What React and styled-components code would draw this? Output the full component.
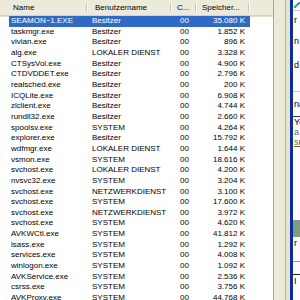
import React from 'react';
import styled, { createGlobalStyle } from 'styled-components';

const GlobalStyle = createGlobalStyle`
  html, body {
    margin: 0;
    padding: 0;
    background: #ffffff;
    overflow: hidden;
  }
`;

const Screen = styled.div`
  display: flex;
  width: 300px;
  height: 300px;
  overflow: hidden;
  font-family: "Liberation Sans", Arial, sans-serif;
  font-size: 8px;
  color: #000;
`;

const ListView = styled.div`
  width: 273px;
  flex-shrink: 0;
  background: #fff;
  border-right: 1px solid #a5a9a6;
  overflow: hidden;
`;

const COLS = '79px 84px 25px 53px';

const HeaderRow = styled.div`
  display: grid;
  grid-template-columns: ${COLS};
  height: 15px;
  padding-left: 9px;
  background: #ebeadb;
  border-bottom: 1px solid #d6d3c3;
  box-shadow: 0 1px 0 #e2dfd0;
`;

const HeaderCell = styled.div`
  display: flex;
  align-items: center;
  padding-left: ${(p) => p.$pad}px;
  white-space: nowrap;
  overflow: hidden;
`;

const HeaderLabel = styled.span`
  flex: 1;
  overflow: hidden;
`;

const Divider = styled.span`
  width: 1px;
  height: 9px;
  background: #c9c6b5;
  border-right: 1px solid #fff;
  flex-shrink: 0;
`;

const Row = styled.div`
  display: grid;
  grid-template-columns: ${COLS};
  height: 10.67px;
  line-height: 10.67px;
  margin-left: 9px;
  width: 241px;
  background: ${(p) => (p.$selected ? '#316ac5' : 'transparent')};
  color: ${(p) => (p.$selected ? '#fff' : '#000')};
  &:first-of-type {
    margin-top: 0.5px;
  }
`;

const Cell = styled.div`
  padding-left: ${(p) => p.$pad || 0}px;
  padding-right: ${(p) => p.$padRight || 0}px;
  text-align: ${(p) => p.$align || 'left'};
  white-space: nowrap;
  overflow: hidden;
`;

const Gutter = styled.div`
  width: 11px;
  flex-shrink: 0;
  background: #ece9d8;
  border-right: 1px solid #b9b5a4;
`;

const GutterInner = styled.div`
  width: 4px;
  flex-shrink: 0;
  background: #e6e3d2;
`;

const BlueEdge = styled.div`
  width: 3px;
  flex-shrink: 0;
  background: #0c2d9c;
`;

const Neighbor = styled.div`
  flex: 1;
  background: #fff;
  overflow: hidden;
  display: flex;
  flex-direction: column;
  font-size: 9px;
`;

const Frag = styled.div`
  height: ${(p) => p.$h}px;
  line-height: ${(p) => p.$h}px;
  padding-left: 1px;
  white-space: nowrap;
  background: ${(p) => p.$bg || 'transparent'};
  border-bottom: ${(p) => (p.$line ? `1px solid ${p.$line}` : 'none')};
  color: ${(p) => p.$color || '#000'};
  text-decoration: ${(p) => (p.$link ? 'underline' : 'none')};
`;

const processes = [
  ['SEAMON~1.EXE', 'Besitzer', '35.080 K'],
  ['taskmgr.exe', 'Besitzer', '1.852 K'],
  ['vivian.exe', 'Besitzer', '896 K'],
  ['alg.exe', 'LOKALER DIENST', '3.328 K'],
  ['CTSysVol.exe', 'Besitzer', '4.900 K'],
  ['CTDVDDET.exe', 'Besitzer', '2.796 K'],
  ['realsched.exe', 'Besitzer', '200 K'],
  ['ICQLite.exe', 'Besitzer', '6.908 K'],
  ['zlclient.exe', 'Besitzer', '4.744 K'],
  ['rundll32.exe', 'Besitzer', '2.660 K'],
  ['spoolsv.exe', 'SYSTEM', '4.264 K'],
  ['explorer.exe', 'Besitzer', '15.792 K'],
  ['wdfmgr.exe', 'LOKALER DIENST', '1.644 K'],
  ['vsmon.exe', 'SYSTEM', '18.616 K'],
  ['svchost.exe', 'LOKALER DIENST', '4.200 K'],
  ['nvsvc32.exe', 'SYSTEM', '3.204 K'],
  ['svchost.exe', 'NETZWERKDIENST', '3.100 K'],
  ['svchost.exe', 'SYSTEM', '17.600 K'],
  ['svchost.exe', 'NETZWERKDIENST', '3.972 K'],
  ['svchost.exe', 'SYSTEM', '4.620 K'],
  ['AVKWCtl.exe', 'SYSTEM', '41.812 K'],
  ['lsass.exe', 'SYSTEM', '1.292 K'],
  ['services.exe', 'SYSTEM', '4.008 K'],
  ['winlogon.exe', 'SYSTEM', '1.092 K'],
  ['AVKService.exe', 'SYSTEM', '2.536 K'],
  ['csrss.exe', 'SYSTEM', '3.756 K'],
  ['AVKProxy.exe', 'SYSTEM', '44.768 K'],
];

const App = () => {
  return (
    <>
      <GlobalStyle />
      <Screen>
        <ListView>
          <HeaderRow>
            <HeaderCell $pad={4}><HeaderLabel>Name</HeaderLabel><Divider /></HeaderCell>
            <HeaderCell $pad={7}><HeaderLabel>Benutzername</HeaderLabel><Divider /></HeaderCell>
            <HeaderCell $pad={5}><HeaderLabel>C...</HeaderLabel><Divider /></HeaderCell>
            <HeaderCell $pad={5}><HeaderLabel>Speicher...</HeaderLabel><Divider /></HeaderCell>
          </HeaderRow>
          {processes.map(([name, user, mem], i) => (
            <Row key={i} $selected={i === 0}>
              <Cell $pad={2}>{name}</Cell>
              <Cell $pad={4}>{user}</Cell>
              <Cell $pad={8}>00</Cell>
              <Cell $align="right" $padRight={5}>{mem}</Cell>
            </Row>
          ))}
        </ListView>
        <Gutter />
        <GutterInner />
        <BlueEdge />
        <Neighbor>
          <Frag $h={10} $line="#c8c8c8">
            <svg width="7" height="6" viewBox="0 0 7 6">
              <path d="M0 6 L6 0" stroke="#3c9a8a" strokeWidth="2" />
            </svg>
          </Frag>
          <Frag $h={18}>r</Frag>
          <Frag $h={24}>n</Frag>
          <Frag $h={24}>d</Frag>
          <Frag $h={14} $line="#c8c8c8" />
          <Frag $h={24} $line="#333">na</Frag>
          <Frag $h={10}>Yo</Frag>
          <Frag $h={10} $color="#666">a</Frag>
          <Frag $h={10} $color="#6b6b2a" $link>sn</Frag>
          <Frag $h={73} />
          <Frag $h={17} $bg="#7e9c80" />
          <Frag $h={12}>r</Frag>
          <Frag $h={12} $line="#999" />
          <Frag $h={12} $line="#222" />
          <Frag $h={12}>I</Frag>
        </Neighbor>
      </Screen>
    </>
  );
};

export default App;
